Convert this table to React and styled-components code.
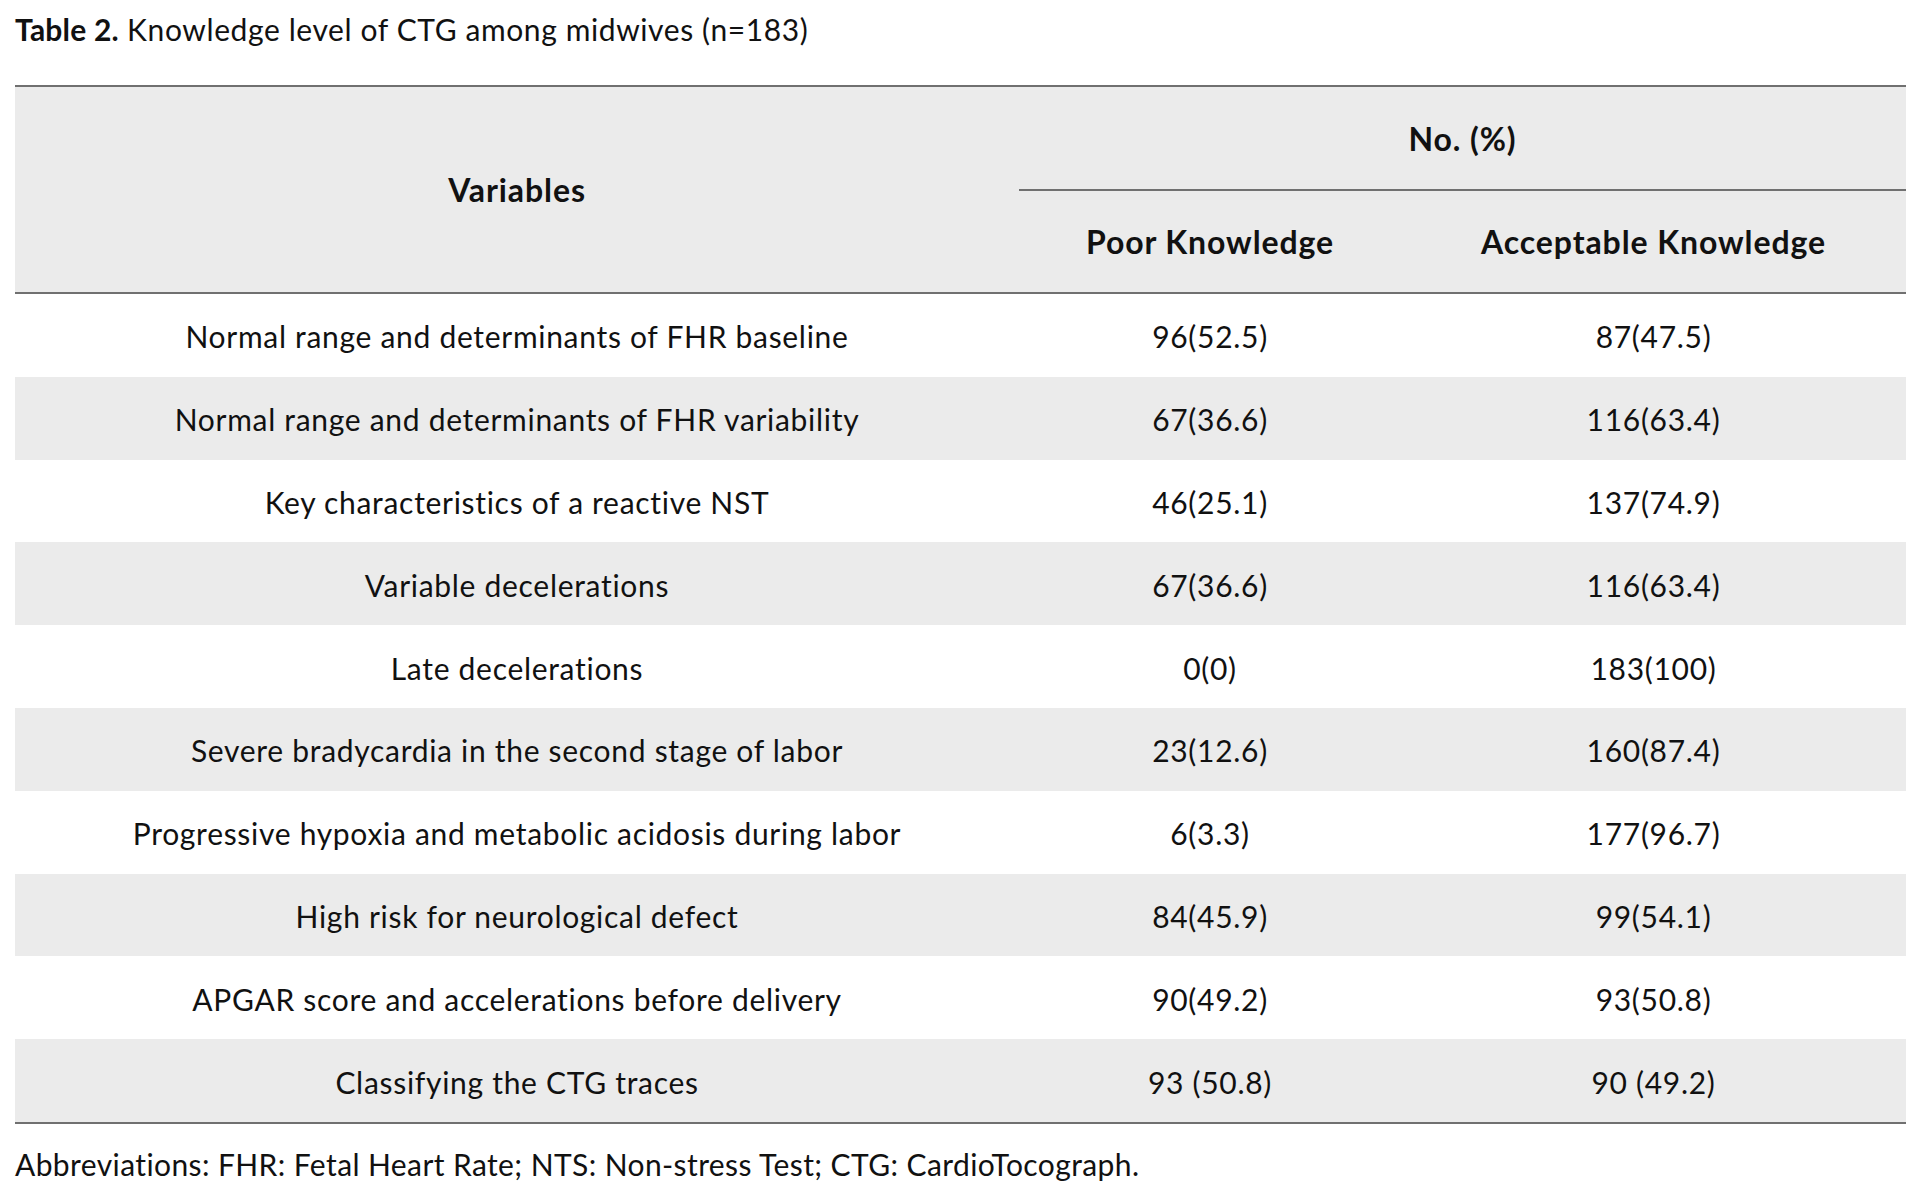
import styled, { createGlobalStyle } from "styled-components";

const GlobalStyle = createGlobalStyle`
  html, body {
    margin: 0;
    padding: 0;
    background: #ffffff;
  }
  body {
    font-family: Lato, "Open Sans", sans-serif;
    color: #111;
  }
`;

const Page = styled.div`
  width: 1891px;
  padding: 11px 0 0 15px;
`;

const Caption = styled.div`
  font-size: 30px;
  letter-spacing: 0.6px;
  line-height: 36px;
  height: 74px;
  color: #111;
  b {
    font-weight: 700;
    letter-spacing: 0.2px;
  }
`;

const Grid = styled.div`
  display: grid;
  grid-template-columns: 1004px 382px 1fr;
  border-top: 2px solid #707070;
  border-bottom: 2px solid #707070;
`;

const HeadCell = styled.div`
  background: #ebebeb;
  display: flex;
  align-items: center;
  justify-content: center;
  font-weight: 700;
  font-size: 32px;
  letter-spacing: 0.9px;
  height: ${(p) => p.$h}px;
  ${(p) => p.$rows && `grid-row: span ${p.$rows};`}
  ${(p) => p.$cols && `grid-column: span ${p.$cols};`}
  ${(p) => p.$line && `border-bottom: 2px solid #707070;`}
`;

const Cell = styled.div`
  height: 82.8px;
  display: flex;
  align-items: center;
  justify-content: center;
  padding-top: 2px;
  box-sizing: border-box;
  font-size: 30px;
  letter-spacing: 0.7px;
  background: ${(p) => (p.$shade ? "#ebebeb" : "#ffffff")};
`;

const HeaderBottom = styled.div`
  grid-column: 1 / -1;
  height: 2px;
  background: #707070;
`;

const Note = styled.div`
  font-size: 30px;
  letter-spacing: 0.4px;
  line-height: 36px;
  margin-top: 22px;
`;

const rows = [
  ["Normal range and determinants of FHR baseline", "96(52.5)", "87(47.5)"],
  ["Normal range and determinants of FHR variability", "67(36.6)", "116(63.4)"],
  ["Key characteristics of a reactive NST", "46(25.1)", "137(74.9)"],
  ["Variable decelerations", "67(36.6)", "116(63.4)"],
  ["Late decelerations", "0(0)", "183(100)"],
  ["Severe bradycardia in the second stage of labor", "23(12.6)", "160(87.4)"],
  ["Progressive hypoxia and metabolic acidosis during labor", "6(3.3)", "177(96.7)"],
  ["High risk for neurological defect", "84(45.9)", "99(54.1)"],
  ["APGAR score and accelerations before delivery", "90(49.2)", "93(50.8)"],
  ["Classifying the CTG traces", "93 (50.8)", "90 (49.2)"],
];

const App = () => {
  return (
    <Page>
      <GlobalStyle />
      <Caption>
        <b>Table 2.</b> Knowledge level of CTG among midwives (n=183)
      </Caption>
      <Grid>
        <HeadCell $rows={2} $h={205}>Variables</HeadCell>
        <HeadCell $cols={2} $h={102} $line>No. (%)</HeadCell>
        <HeadCell $h={101}>Poor Knowledge</HeadCell>
        <HeadCell $h={101}>Acceptable Knowledge</HeadCell>
        <HeaderBottom />
        {rows.map((r, i) =>
          r.map((v, j) => (
            <Cell key={i + "-" + j} $shade={i % 2 === 1}>
              {v}
            </Cell>
          ))
        )}
      </Grid>
      <Note>Abbreviations: FHR: Fetal Heart Rate; NTS: Non-stress Test; CTG: CardioTocograph.</Note>
    </Page>
  );
};

export default App;
